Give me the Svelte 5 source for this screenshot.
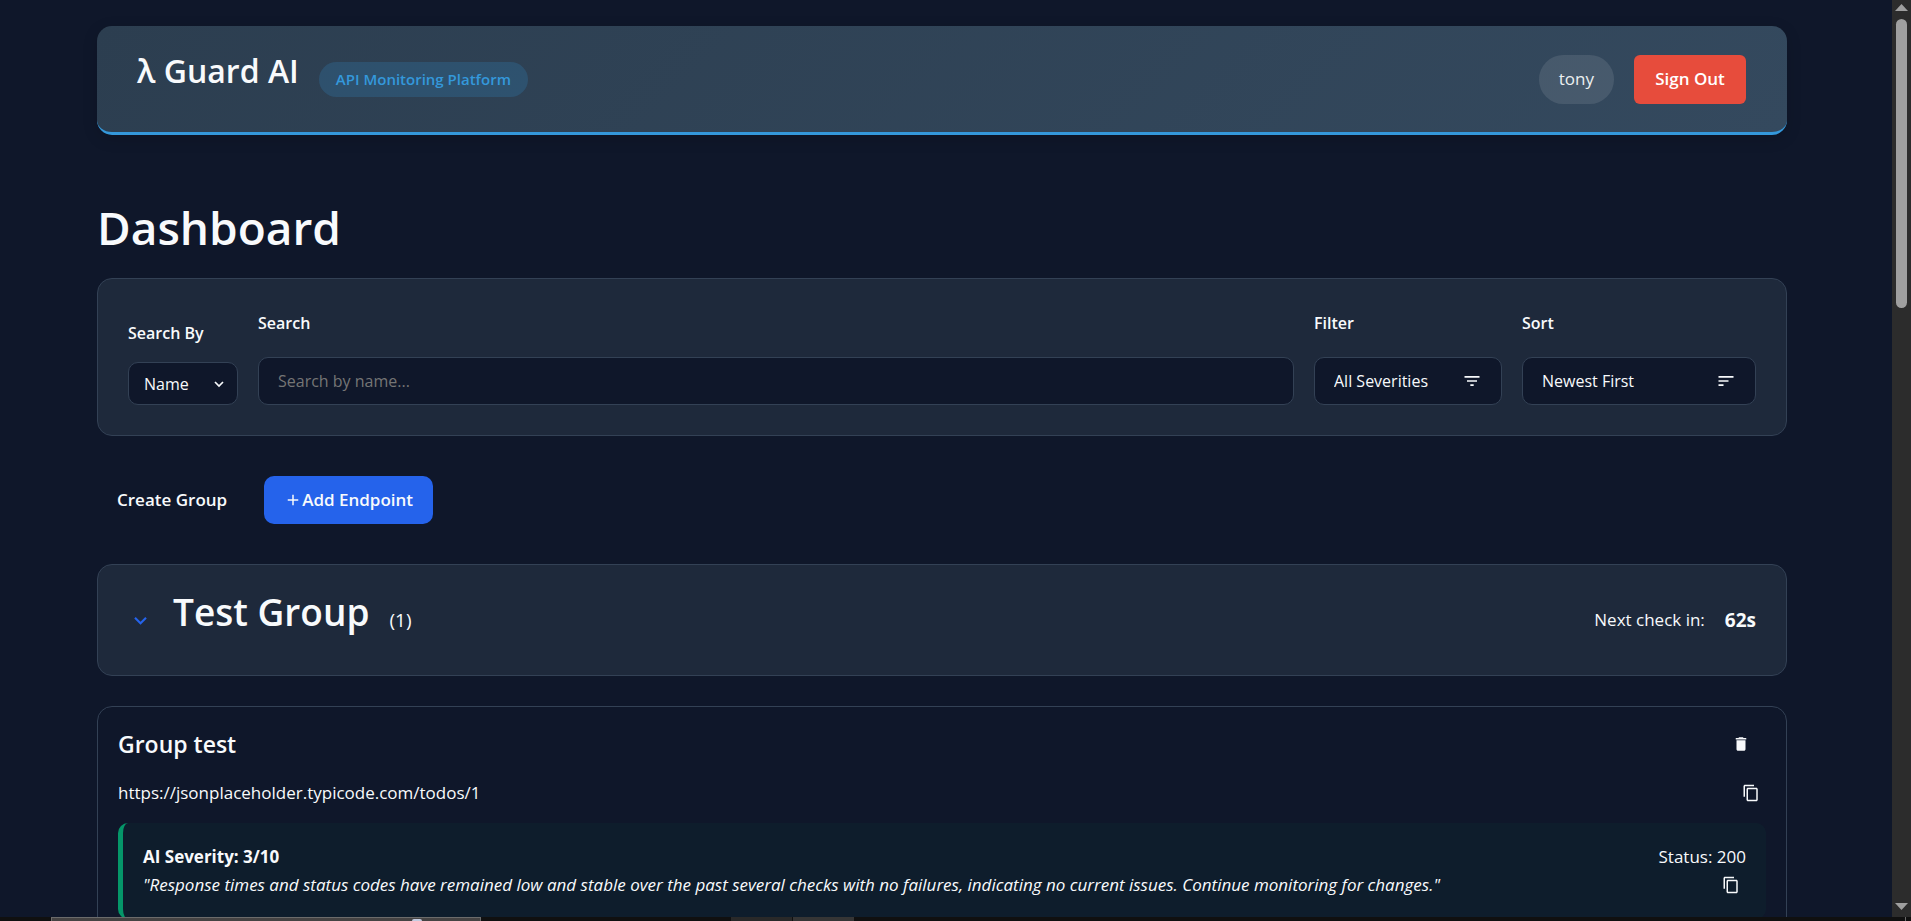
<script>
  const url = 'https://jsonplaceholder.typicode.com/todos/1';
  const summary =
    '"Response times and status codes have remained low and stable over the past several checks with no failures, indicating no current issues. Continue monitoring for changes."';

  let searchBy = $state('name');
  let query = $state('');
  let severity = $state('all');
  let order = $state('newest');
  let open = $state(true);

  function copy(text) {
    navigator.clipboard?.writeText(text);
  }
</script>

{#snippet copyIcon()}
  <svg class="icon-sm" viewBox="0 0 24 24" aria-hidden="true">
    <path d="M16 1H4c-1.1 0-2 .9-2 2v14h2V3h12V1zm3 4H8c-1.1 0-2 .9-2 2v14c0 1.1.9 2 2 2h11c1.1 0 2-.9 2-2V7c0-1.1-.9-2-2-2zm0 16H8V7h11v14z" />
  </svg>
{/snippet}

<div class="window">
  <div class="viewport">
    <header class="topbar">
      <div class="row">
        <div class="brand">λ Guard AI</div>
        <span class="badge">API Monitoring Platform</span>
      </div>
      <div class="row">
        <span class="user">tony</span>
        <button class="sign-out">Sign Out</button>
      </div>
    </header>

    <main>
      <h1>Dashboard</h1>

      <section class="panel filters">
        <div class="field compact">
          <label for="search-by">Search By</label>
          <div class="select by">
            <select id="search-by" bind:value={searchBy}>
              <option value="name">Name</option>
              <option value="url">URL</option>
            </select>
            <svg viewBox="0 0 20 20" aria-hidden="true">
              <path class="stroke" d="M6 8l4 4 4-4" />
            </svg>
          </div>
        </div>
        <div class="field grow">
          <label for="search">Search</label>
          <input id="search" type="text" placeholder="Search by name..." bind:value={query} />
        </div>
        <div class="field">
          <label for="filter">Filter</label>
          <div class="select severity">
            <select id="filter" bind:value={severity}>
              <option value="all">All Severities</option>
              <option value="high">High</option>
              <option value="low">Low</option>
            </select>
            <svg viewBox="0 0 24 24" aria-hidden="true">
              <path d="M10 18h4v-2h-4v2zM3 6v2h18V6H3zm3 7h12v-2H6v2z" />
            </svg>
          </div>
        </div>
        <div class="field">
          <label for="sort">Sort</label>
          <div class="select order">
            <select id="sort" bind:value={order}>
              <option value="newest">Newest First</option>
              <option value="oldest">Oldest First</option>
            </select>
            <svg viewBox="0 0 24 24" aria-hidden="true">
              <path d="M3 18h6v-2H3v2zM3 6v2h18V6H3zm0 7h12v-2H3v2z" />
            </svg>
          </div>
        </div>
      </section>

      <div class="actions">
        <button class="ghost">Create Group</button>
        <button class="primary">
          <svg class="icon-sm" viewBox="0 0 24 24" aria-hidden="true">
            <path d="M19 13h-6v6h-2v-6H5v-2h6V5h2v6h6v2z" />
          </svg>
          Add Endpoint
        </button>
      </div>

      <section class="panel group">
        <div class="row">
          <button class="toggle" aria-label="Toggle group" aria-expanded={open} onclick={() => (open = !open)}>
            <svg viewBox="0 0 24 24" aria-hidden="true">
              <path d="M16.59 8.59L12 13.17 7.41 8.59 6 10l6 6 6-6z" />
            </svg>
          </button>
          <h2>Test Group</h2>
          <span class="count">(1)</span>
        </div>
        <div class="row">
          <span>Next check in:</span>
          <strong class="timer">62s</strong>
        </div>
      </section>

      {#if open}
        <article class="panel card">
          <div class="line head">
            <h3>Group test</h3>
            <button class="icon-button wide" aria-label="Delete endpoint">
              <svg class="icon-sm" viewBox="0 0 24 24" aria-hidden="true">
                <path d="M6 19c0 1.1.9 2 2 2h8c1.1 0 2-.9 2-2V7H6v12zM19 4h-3.5l-1-1h-5l-1 1H5v2h14V4z" />
              </svg>
            </button>
          </div>
          <div class="line">
            <span>{url}</span>
            <button class="icon-button" aria-label="Copy URL" onclick={() => copy(url)}>{@render copyIcon()}</button>
          </div>
          <div class="insight">
            <div class="line">
              <strong>AI Severity: 3/10</strong>
              <span>Status: 200</span>
            </div>
            <div class="line">
              <em>{summary}</em>
              <button class="icon-button" aria-label="Copy summary" onclick={() => copy(summary)}>{@render copyIcon()}</button>
            </div>
          </div>
        </article>
      {/if}
    </main>
  </div>

  <div class="scrollbar" aria-hidden="true">
    <svg viewBox="0 0 13 7"><path d="M6.5 0L13 7H0z" /></svg>
    <div class="track"><div class="thumb"></div></div>
    <svg viewBox="0 0 13 7"><path d="M0 0h13L6.5 7z" /></svg>
  </div>

  <div class="taskbar" aria-hidden="true">
    <div class="search-box"><i></i></div>
    <div class="task"></div>
    <div class="task active"></div>
    <div class="peek"></div>
  </div>
</div>

<style>
  :global(body) {
    background: #0f172a;
    overflow: hidden;
  }

  .window {
    display: grid;
    grid-template-columns: minmax(0, 1fr) 19px;
    grid-template-rows: minmax(0, 1fr) 4px;
    height: 100vh;
    color: #f8fafc;
    font: 400 17px/28px 'Segoe UI', 'Open Sans', 'Noto Sans', sans-serif;
  }

  .window :is(div, header, section, article, button, input, select, span) {
    box-sizing: border-box;
  }

  .viewport {
    overflow: hidden;
    padding: 26px 105px 0 97px;
  }

  h1, h2, h3 {
    margin: 0;
    font-weight: 600;
  }

  button, input, select {
    font: inherit;
    color: inherit;
  }

  button {
    border: 0;
    background: none;
    cursor: pointer;
  }

  svg {
    display: block;
    fill: currentColor;
  }

  .icon-sm {
    width: 18px;
    height: 18px;
  }

  .row {
    display: flex;
    align-items: center;
    gap: 20px;
  }

  .topbar {
    display: flex;
    align-items: center;
    justify-content: space-between;
    padding: 29px 41px 28px 40px;
    border-bottom: 3px solid #3498db;
    border-radius: 15px;
    background: linear-gradient(135deg, #2c3e50, #34495e);
    box-shadow: 0 4px 15px rgba(0, 0, 0, 0.15);
  }

  .brand {
    margin-bottom: 17px;
    font-size: 32px;
    font-weight: 600;
    line-height: 32px;
  }

  .badge {
    padding: 5px 17px;
    border-radius: 18px;
    background: rgba(52, 152, 219, 0.2);
    color: #3498db;
    font-size: 15px;
    font-weight: 600;
    line-height: 25px;
  }

  .user {
    padding: 10px 20px 11px;
    border-radius: 25px;
    background: rgba(255, 255, 255, 0.1);
    color: #ecf0f1;
  }

  .sign-out {
    min-width: 112px;
    padding: 10px 20px 11px;
    border-radius: 6px;
    background: #e74c3c;
    color: #fff;
    font-weight: 600;
  }

  h1 {
    margin: 62px 0 21px;
    font-size: 46px;
    line-height: 60px;
  }

  .panel {
    border: 1px solid #334155;
    border-radius: 15px;
    background: #1e293b;
  }

  .filters {
    display: flex;
    align-items: flex-end;
    gap: 20px;
    padding: 30px;
  }

  .field {
    display: flex;
    flex-direction: column;
    gap: 20px;
  }

  .field.compact {
    gap: 15px;
  }

  .field.grow {
    flex: 1;
  }

  label {
    font-size: 16px;
    font-weight: 600;
  }

  input,
  select {
    width: 100%;
    height: 48px;
    padding: 0 19px;
    border: 1px solid #334155;
    border-radius: 10px;
    outline: none;
    appearance: none;
    background: #0f172a;
    font-size: 16px;
  }

  input::placeholder {
    color: #757575;
    opacity: 1;
  }

  .select {
    display: grid;
    align-items: center;
  }

  .select > * {
    grid-area: 1 / 1;
  }

  .select svg {
    width: 20px;
    height: 20px;
    margin-right: 20px;
    justify-self: end;
    pointer-events: none;
  }

  .by {
    width: 110px;
  }

  .by select {
    height: 43px;
    padding: 0 15px;
  }

  .by svg {
    margin-right: 9px;
  }

  .stroke {
    fill: none;
    stroke: currentColor;
    stroke-width: 1.7;
  }

  .severity {
    width: 188px;
  }

  .order {
    width: 234px;
  }

  .actions {
    display: flex;
    gap: 17px;
    margin: 40px 0;
  }

  .actions button {
    display: flex;
    align-items: center;
    height: 48px;
    padding: 0 20px;
    border-radius: 10px;
    font-weight: 600;
  }

  .primary {
    background: #2563eb;
  }

  .group {
    display: flex;
    align-items: center;
    justify-content: space-between;
    padding: 25px 30px;
  }

  .toggle {
    padding: 0;
    color: #2563eb;
  }

  .toggle svg {
    width: 25px;
    height: 25px;
  }

  h2 {
    margin-bottom: 16px;
    font-size: 37px;
    line-height: 44px;
  }

  .count,
  .timer {
    font-size: 19px;
  }

  .card {
    margin-top: 30px;
    padding: 19px 20px 20px;
    background: #0f172a;
  }

  .line {
    display: flex;
    align-items: center;
    justify-content: space-between;
  }

  .head {
    margin-bottom: 17px;
  }

  h3 {
    font-size: 23px;
    line-height: 36px;
  }

  .icon-button {
    padding: 0 6px;
  }

  .wide {
    padding: 0 16px;
  }

  .insight {
    margin-top: 16px;
    padding: 20px;
    border-left: 5px solid #059669;
    border-radius: 10px;
    background: rgba(5, 150, 105, 0.05);
  }

  .scrollbar {
    display: flex;
    flex-direction: column;
    align-items: center;
    justify-content: space-between;
    gap: 8px;
    padding: 4px 0 7px;
    background: #2c2c2c;
    color: #9f9f9f;
  }

  .scrollbar svg {
    width: 13px;
    height: 7px;
  }

  .track {
    flex: 1;
    width: 11px;
  }

  .thumb {
    height: 33%;
    border-radius: 6px;
    background: #9f9f9f;
  }

  .taskbar {
    grid-column: 1 / -1;
    display: flex;
    gap: 1px;
    padding: 0 5px 0 51px;
    background: #101010;
  }

  .search-box {
    width: 430px;
    margin-right: 249px;
    border: 1px solid #6b6b6b;
    border-bottom: 0;
    background: #454343;
  }

  .search-box i {
    display: block;
    width: 10px;
    height: 2px;
    margin: 1px 0 0 360px;
    border-radius: 5px 5px 0 0;
    background: #c3cbe0;
  }

  .task {
    width: 61px;
    background: #292929;
  }

  .task.active {
    background: #353535;
  }

  .peek {
    width: 1px;
    margin-left: auto;
    background: #6b6b6b;
  }
</style>
